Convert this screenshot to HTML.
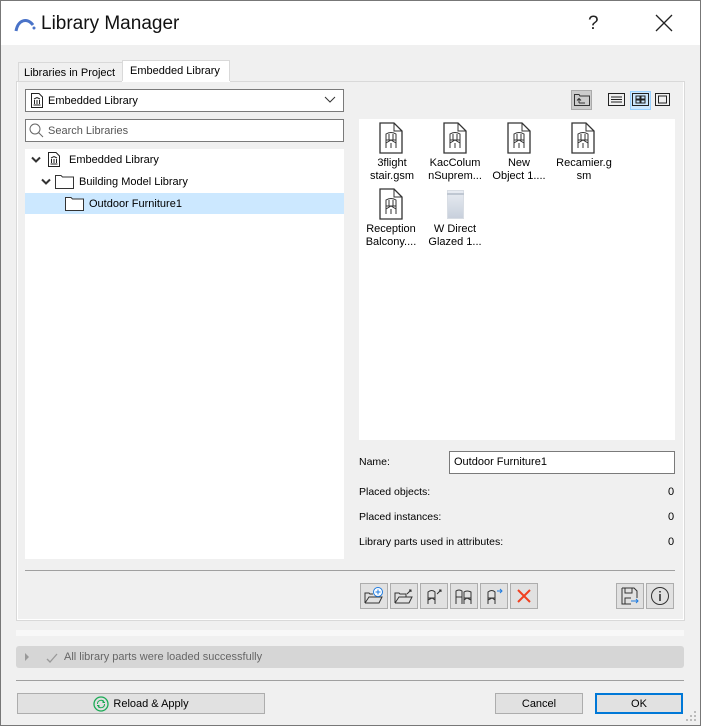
<!DOCTYPE html>
<html><head><style>
*{box-sizing:border-box;margin:0;padding:0}
body{width:701px;height:726px;background:#f0f0f0;font-family:"Liberation Sans","DejaVu Sans",sans-serif;font-size:11px;color:#000;position:relative;overflow:hidden}
.a{position:absolute}
.win{left:0;top:0;width:701px;height:726px;border:1px solid #777;}
.title{left:1px;top:1px;width:699px;height:44px;background:#fff}
.btn{position:absolute;background:#e1e1e1;border:1px solid #adadad;display:flex;align-items:center;justify-content:center}
.tb{width:28px;height:26px}
.tx{white-space:nowrap}
</style></head><body>
<div class="a win"></div>
<div class="a title"></div>
<svg class="a" style="left:13px;top:14px" width="24" height="20"><path d="M3 17 C5 6 14 3 20 11" stroke="#4a73c8" stroke-width="3" fill="none"/><circle cx="21" cy="14" r="1.5" fill="#4a73c8"/></svg>
<div class="a tx" style="left:41px;top:13px;font-size:19px;color:#111">Library Manager</div>
<div class="a tx" style="left:588px;top:13px;font-size:19px;color:#222">?</div>
<svg class="a" style="left:655px;top:14px" width="18" height="18"><path d="M1 1L17 17M17 1L1 17" stroke="#222" stroke-width="1.3"/></svg>

<!-- tabs -->
<div class="a" style="left:18px;top:62px;width:105px;height:20px;border:1px solid #d9d9d9;border-bottom:none;background:#f0f0f0"></div>
<div class="a tx" style="left:24px;top:67px">Libraries in Project</div>
<div class="a" style="left:122px;top:60px;width:108px;height:22px;border:1px solid #d9d9d9;border-bottom:none;background:#fff"></div>
<div class="a tx" style="left:130px;top:65px">Embedded Library</div>
<div class="a" style="left:16px;top:81px;width:669px;height:540px;border:1px solid #d9d9d9;border-top:none;box-shadow:inset 0 0 0 1px #fff;background:#f0f0f0"></div>
<div class="a" style="left:17px;top:81px;width:105px;height:1px;background:#d9d9d9"></div>
<div class="a" style="left:230px;top:81px;width:454px;height:1px;background:#d9d9d9"></div>

<!-- dropdown -->
<div class="a" style="left:25px;top:89px;width:319px;height:23px;border:1px solid #7a7a7a;background:#fff"></div>
<svg class="a" style="left:30px;top:92px" width="14" height="17"><path d="M1.5 1.5H9L12.5 5V15.5H1.5Z" fill="#fff" stroke="#222"/><path d="M4 7L7 5.5 10 7M4.5 8v4M7 8v4M9.5 8v4M3.5 13h7" stroke="#222" fill="none"/></svg>
<div class="a tx" style="left:48px;top:95px">Embedded Library</div>
<svg class="a" style="left:324px;top:96px" width="12" height="8"><path d="M1 1L6 6 11 1" stroke="#333" fill="none"/></svg>
<!-- search -->
<div class="a" style="left:25px;top:119px;width:319px;height:23px;border:1px solid #7a7a7a;background:#fff"></div>
<svg class="a" style="left:29px;top:123px" width="15" height="15"><circle cx="6" cy="6" r="5" stroke="#666" fill="none"/><path d="M9.5 9.5L14 14" stroke="#666"/></svg>
<div class="a tx" style="left:48px;top:125px;color:#555">Search Libraries</div>
<!-- tree -->
<div class="a" style="left:25px;top:149px;width:319px;height:410px;background:#fff"></div>
<svg class="a" style="left:31px;top:156px" width="10" height="8"><path d="M1 1.5L5 5.5 9 1.5" stroke="#333" stroke-width="2" fill="none"/></svg>
<svg class="a" style="left:47px;top:151px" width="14" height="17"><path d="M1.5 1.5H9L12.5 5V15.5H1.5Z" fill="#fff" stroke="#222"/><path d="M4 7L7 5.5 10 7M4.5 8v4M7 8v4M9.5 8v4M3.5 13h7" stroke="#222" fill="none"/></svg>
<div class="a tx" style="left:69px;top:154px">Embedded Library</div>
<svg class="a" style="left:41px;top:178px" width="10" height="8"><path d="M1 1.5L5 5.5 9 1.5" stroke="#333" stroke-width="2" fill="none"/></svg>
<svg class="a" style="left:55px;top:173px" width="20" height="16"><path d="M.5 2.5H6L7.5 4H18.5V15.5H.5Z" fill="#fff" stroke="#333"/></svg>
<div class="a tx" style="left:79px;top:176px">Building Model Library</div>
<div class="a" style="left:25px;top:193px;width:319px;height:21px;background:#cce8ff"></div>
<svg class="a" style="left:65px;top:195px" width="20" height="16"><path d="M.5 2.5H6L7.5 4H18.5V15.5H.5Z" fill="#fff" stroke="#333"/></svg>
<div class="a tx" style="left:89px;top:198px">Outdoor Furniture1</div>

<!-- view buttons -->
<div class="a" style="left:571px;top:90px;width:21px;height:20px;background:#ccc;border:1px solid #aaa"></div>
<svg class="a" style="left:574px;top:94px" width="16" height="12"><path d="M.5 .5H5L6 2H15.5V11.5H.5Z" fill="none" stroke="#333"/><path d="M5 9V5M3 6.5L5 4.5 7 6.5M5 9H11" stroke="#333" fill="none"/></svg>
<svg class="a" style="left:608px;top:93px" width="18" height="14"><rect x=".5" y=".5" width="16" height="12" fill="none" stroke="#222"/><path d="M3 4h11M3 6.5h11M3 9h11" stroke="#222"/></svg>
<div class="a" style="left:630px;top:91px;width:21px;height:19px;background:#cce8ff;border:1px solid #99d1ff"></div>
<svg class="a" style="left:632px;top:93px" width="18" height="14"><rect x=".5" y=".5" width="16" height="12" fill="none" stroke="#222"/><rect x="4" y="3" width="4" height="3" fill="none" stroke="#222"/><rect x="9" y="3" width="4" height="3" fill="none" stroke="#222"/><rect x="4" y="7" width="4" height="3" fill="none" stroke="#222"/><rect x="9" y="7" width="4" height="3" fill="none" stroke="#222"/></svg>
<svg class="a" style="left:655px;top:93px" width="16" height="14"><rect x=".5" y=".5" width="14" height="12" fill="none" stroke="#222"/><rect x="3.5" y="3" width="8" height="7" fill="none" stroke="#222"/></svg>

<!-- files -->
<div class="a" style="left:359px;top:119px;width:316px;height:321px;background:#fff"></div>
<svg width="0" height="0" style="position:absolute"><defs><symbol id="f" viewBox="0 0 24 32"><path d="M1 1H15L23 9V31H1Z" fill="#fff" stroke="#333" stroke-width="1.3"/><path d="M15 1V9H23" fill="none" stroke="#333"/><path d="M7 26V12Q12 9 17 12V26M7 18H17M7 21L12 18 17 21M12 21V26M10 12V18M14 12V18" fill="none" stroke="#333"/></symbol></defs></svg>
<svg class="a" style="left:379px;top:122px" width="24" height="32"><use href="#f"/></svg>
<svg class="a" style="left:443px;top:122px" width="24" height="32"><use href="#f"/></svg>
<svg class="a" style="left:507px;top:122px" width="24" height="32"><use href="#f"/></svg>
<svg class="a" style="left:571px;top:122px" width="24" height="32"><use href="#f"/></svg>
<svg class="a" style="left:379px;top:188px" width="24" height="32"><use href="#f"/></svg>
<div class="a" style="left:447px;top:190px;width:17px;height:29px;background:linear-gradient(#e8ecf2,#c8d0dc);border:1px solid #d8dde4"></div>
<div class="a" style="left:447px;top:193px;width:17px;height:2px;background:#bfc7d2"></div>
<div class="a" style="left:361px;top:157px;width:62px;text-align:center;line-height:13px">3flight<br>stair.gsm</div>
<div class="a" style="left:424px;top:157px;width:62px;text-align:center;line-height:13px">KacColum<br>nSuprem...</div>
<div class="a" style="left:488px;top:157px;width:62px;text-align:center;line-height:13px">New<br>Object 1....</div>
<div class="a" style="left:550px;top:157px;width:68px;text-align:center;line-height:13px">Recamier.g<br>sm</div>
<div class="a" style="left:359px;top:223px;width:64px;text-align:center;line-height:13px">Reception<br>Balcony....</div>
<div class="a" style="left:424px;top:223px;width:62px;text-align:center;line-height:13px">W Direct<br>Glazed 1...</div>

<div class="a tx" style="left:359px;top:456px;font-size:10.5px">Name:</div>
<div class="a" style="left:449px;top:451px;width:226px;height:23px;border:1px solid #7a7a7a;background:#fff"></div>
<div class="a tx" style="left:454px;top:456px">Outdoor Furniture1</div>
<div class="a tx" style="left:359px;top:486px;font-size:10.5px">Placed objects:</div>
<div class="a tx" style="left:668px;top:486px">0</div>
<div class="a tx" style="left:359px;top:511px;font-size:10.5px">Placed instances:</div>
<div class="a tx" style="left:668px;top:511px">0</div>
<div class="a tx" style="left:359px;top:536px;font-size:10.5px">Library parts used in attributes:</div>
<div class="a tx" style="left:668px;top:536px">0</div>

<div class="a" style="left:25px;top:570px;width:650px;height:1px;background:#a0a0a0"></div>

<!-- toolbar -->
<div class="btn tb" style="left:360px;top:583px"><svg width="20" height="20"><path d="M1 17V7H5L6 8H9M1 17H15L18 11H5L1 17" fill="none" stroke="#333"/><circle cx="14" cy="6" r="4.5" fill="#fff" stroke="#1e7be0"/><path d="M14 3.5V8.5M11.5 6H16.5" stroke="#1e7be0"/></svg></div>
<div class="btn tb" style="left:390px;top:583px"><svg width="20" height="20"><path d="M1 17V7H5L6 8H12V11M1 17H15L18 11H5L1 17" fill="none" stroke="#333"/><path d="M13 8L17 4M15 4H17V6" stroke="#333" fill="none"/></svg></div>
<div class="btn tb" style="left:420px;top:583px"><svg width="20" height="20"><path d="M4 18V6Q8 3 11 6V18M4 12H11M4 14L8 12 11 14M13 8L17 4M15 4H17V6" fill="none" stroke="#333"/></svg></div>
<div class="btn tb" style="left:450px;top:583px"><svg width="20" height="20"><path d="M2 18V5Q5 3 8 5V18M2 11H8M10 18V6Q13 4 17 6V18M10 12H17M10 14L13 12 17 14" fill="none" stroke="#333"/></svg></div>
<div class="btn tb" style="left:480px;top:583px"><svg width="20" height="20"><path d="M4 18V6Q8 3 11 6V18M4 12H11M4 14L8 12 11 14" fill="none" stroke="#333"/><path d="M13 5H18M16 3L18 5 16 7" fill="none" stroke="#1e7be0"/></svg></div>
<div class="btn tb" style="left:510px;top:583px"><svg width="18" height="18"><path d="M3 3L15 15M15 3L3 15" stroke="#f04020" stroke-width="2"/></svg></div>
<div class="btn tb" style="left:616px;top:583px"><svg width="20" height="20"><path d="M2 2H14L17 5V12M2 2V18H11M5 2V7H12V2M5 18V12H11" fill="none" stroke="#333"/><path d="M11 15H18M16 13L18 15 16 17" stroke="#1e7be0" fill="none"/></svg></div>
<div class="btn tb" style="left:646px;top:583px"><svg width="20" height="20"><circle cx="10" cy="10" r="8.5" fill="none" stroke="#333"/><path d="M10 8V15M10 5V6.5" stroke="#333" stroke-width="1.6"/></svg></div>

<div class="a" style="left:16px;top:630px;width:668px;height:6px;background:#f8f8f8"></div>
<div class="a" style="left:16px;top:646px;width:668px;height:22px;background:#d6d6d6;border-radius:3px"></div>
<svg class="a" style="left:25px;top:653px" width="5" height="8"><path d="M0 0L4 4 0 8Z" fill="#999"/></svg>
<svg class="a" style="left:46px;top:653px" width="12" height="10"><path d="M1 6L4 9 11 1" stroke="#999" stroke-width="1.3" fill="none"/></svg>
<div class="a tx" style="left:64px;top:651px;color:#666">All library parts were loaded successfully</div>
<div class="a" style="left:16px;top:680px;width:668px;height:1px;background:#a0a0a0"></div>

<div class="btn" style="left:17px;top:693px;width:248px;height:21px"><svg width="16" height="16" style="margin-right:4px"><circle cx="8" cy="8" r="7" fill="none" stroke="#1aaa55" stroke-width="1.3"/><path d="M4.5 8A3.5 3.5 0 0 1 11 6M11.5 8A3.5 3.5 0 0 1 5 10M10 4V6.5H12M6 12V9.5H4" fill="none" stroke="#1aaa55"/></svg>Reload &amp; Apply</div>
<div class="btn" style="left:495px;top:693px;width:88px;height:21px">Cancel</div>
<div class="btn" style="left:595px;top:693px;width:88px;height:21px;border:2px solid #0078d7">OK</div>
<svg class="a" style="left:686px;top:711px" width="12" height="12"><g fill="#bbb"><rect x="8" y="0" width="2" height="2"/><rect x="4" y="4" width="2" height="2"/><rect x="8" y="4" width="2" height="2"/><rect x="0" y="8" width="2" height="2"/><rect x="4" y="8" width="2" height="2"/><rect x="8" y="8" width="2" height="2"/></g></svg>
</body></html>
